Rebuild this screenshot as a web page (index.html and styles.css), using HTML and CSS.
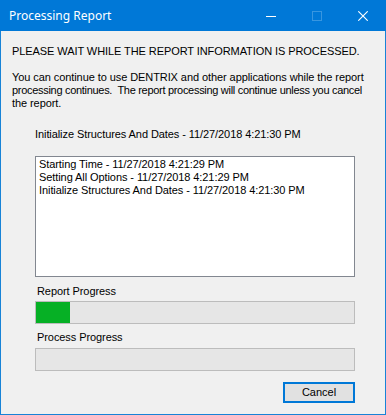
FILE: index.html
```html
<!DOCTYPE html>
<html lang="en">
<head>
	<meta charset="UTF-8">
	<title>Processing Report</title>
	<link rel="stylesheet" href="styles.css">
</head>
<body>
	<div class="window">
		<div class="titlebar">
			<span class="title">Processing Report</span>
			<div class="caption_btns">
				<span class="cap_btn">
					<svg width="10" height="10" viewBox="0 0 10 10"><path d="M0 5.5H10" stroke="#fff" stroke-width="1"/></svg>
				</span>
				<span class="cap_btn disabled">
					<svg width="10" height="10" viewBox="0 0 10 10"><rect x="0.5" y="0.5" width="9" height="9" fill="none" stroke="#3896e0" stroke-width="1"/></svg>
				</span>
				<span class="cap_btn">
					<svg width="10" height="10" viewBox="0 0 10 10"><path d="M0.3 0.3L9.7 9.7M9.7 0.3L0.3 9.7" stroke="#fff" stroke-width="1.1"/></svg>
				</span>
			</div>
		</div>
		<div class="content">
			<p class="heading">PLEASE WAIT WHILE THE REPORT INFORMATION IS PROCESSED.</p>
			<p class="info">You can continue to use DENTRIX and other applications while the report<br><span class="tight">processing continues.&nbsp; The report processing will continue unless you cancel</span><br>the report.</p>
			<p class="status">Initialize Structures And Dates - 11/27/2018 4:21:30 PM</p>
			<ul class="log">
				<li>Starting Time - 11/27/2018 4:21:29 PM</li>
				<li>Setting All Options - 11/27/2018 4:21:29 PM</li>
				<li>Initialize Structures And Dates - 11/27/2018 4:21:30 PM</li>
			</ul>
			<p class="bar_label">Report Progress</p>
			<div class="bar"><div class="fill" style="width:34px"></div></div>
			<p class="bar_label second">Process Progress</p>
			<div class="bar"></div>
			<div class="buttons">
				<button class="btn">Cancel</button>
			</div>
		</div>
	</div>
</body>
</html>
```

FILE: styles.css
```css
*{
	margin:0;
	padding:0;
	list-style:none;
	box-sizing:border-box;
}
body{
	background:#fff;
	font-family:"Liberation Sans", Arial, sans-serif;
	font-size:11px;
	line-height:13px;
	color:#000;
}
.window{
	width:386px;
	height:415px;
	background:#f0f0f0;
	border:1px solid #1883d7;
	border-top:0;
	display:flex;
	flex-direction:column;
}
.titlebar{
	height:31px;
	margin:0 -1px;
	background:#0078d7;
	display:flex;
	align-items:center;
	color:#fff;
}
.title{
	flex:1;
	padding-left:9px;
	padding-bottom:1px;
	font-family:"Noto Sans", sans-serif;
	font-size:12px;
}
.caption_btns{
	display:flex;
	height:100%;
}
.cap_btn{
	width:46px;
	height:100%;
	display:flex;
	align-items:center;
	justify-content:center;
}
.cap_btn svg{
	display:block;
}
.content{
	padding:14px 0 0 11px;
	letter-spacing:-0.08px;
}
.info{
	margin-top:13px;
	white-space:nowrap;
}
.info .tight{
	letter-spacing:-0.3px;
}
.status{
	margin:18px 0 0 23px;
}
.log{
	margin:15px 0 0 23px;
	width:320px;
	height:121px;
	background:#fff;
	border:1px solid #828790;
	padding:1px 3px;
}
.bar_label{
	margin:8px 0 0 25px;
}
.bar_label.second{
	margin-top:7px;
}
.bar{
	margin:3px 0 0 23px;
	width:320px;
	height:23px;
	background:#e6e6e6;
	border:1px solid #bcbcbc;
}
.second + .bar{
	margin-top:4px;
}
.fill{
	height:100%;
	background:#06b025;
}
.buttons{
	margin-top:11px;
	width:343px;
	display:flex;
	justify-content:flex-end;
}
.btn{
	width:72px;
	height:21px;
	background:#e1e1e1;
	border:2px solid #0078d7;
	font-family:"Liberation Sans", Arial, sans-serif;
	font-size:11px;
	color:#000;
	padding-bottom:1px;
}
```
